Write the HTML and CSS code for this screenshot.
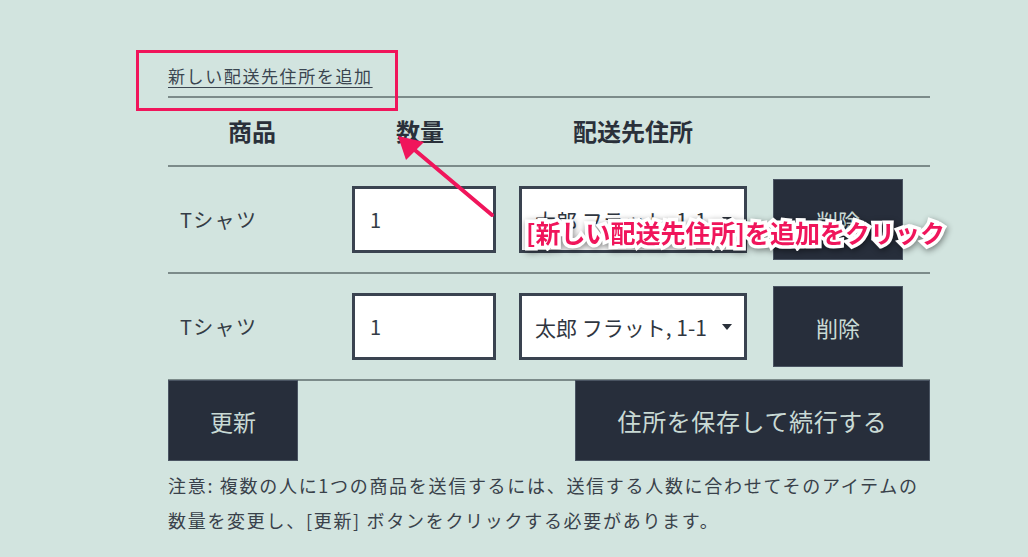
FILE: index.html
```html
<!DOCTYPE html>
<html lang="ja">
<head>
    <meta charset="UTF-8">
    <meta name="viewport" content="width=device-width, initial-scale=1.0">
    <title>配送先住所</title>
    <link rel="stylesheet" href="styles.css">
</head>
<body>
    <div class="page">
        <div class="add-row">
            <a class="add-link" href="#">新しい配送先住所を追加</a>
        </div>

        <div class="cart">
            <div class="cart-head">
                <div class="head-cell">商品</div>
                <div class="head-cell">数量</div>
                <div class="head-cell">配送先住所</div>
                <div class="head-cell"></div>
            </div>

            <div class="cart-row">
                <div class="item-name">Tシャツ</div>
                <div class="qty-cell"><div class="qty-box">1</div></div>
                <div class="addr-cell">
                    <div class="addr-select">
                        <span class="addr-text">太郎 フラット, 1-1</span>
                        <span class="caret"></span>
                    </div>
                </div>
                <div class="del-cell"><button class="btn btn-del">削除</button></div>
            </div>

            <div class="cart-row">
                <div class="item-name">Tシャツ</div>
                <div class="qty-cell"><div class="qty-box">1</div></div>
                <div class="addr-cell">
                    <div class="addr-select">
                        <span class="addr-text">太郎 フラット, 1-1</span>
                        <span class="caret"></span>
                    </div>
                </div>
                <div class="del-cell"><button class="btn btn-del">削除</button></div>
            </div>
        </div>

        <div class="actions">
            <button class="btn btn-update">更新</button>
            <button class="btn btn-save">住所を保存して続行する</button>
        </div>

        <p class="note">注意: 複数の人に1つの商品を送信するには、送信する人数に合わせてそのアイテムの数量を変更し、[更新] ボタンをクリックする必要があります。</p>
    </div>

    <!-- annotation layer -->
    <div class="callout-box"></div>
    <svg class="callout-arrow" width="120" height="100" viewBox="0 0 120 100">
        <line x1="94" y1="79" x2="12" y2="10" stroke="#f0155b" stroke-width="4" stroke-linecap="round"/>
        <polygon points="0,0 26,6 8,24" fill="#f0155b"/>
    </svg>
    <div class="callout-label">[新しい配送先住所]を追加をクリック</div>
</body>
</html>
```

FILE: styles.css
```css
body {
    margin: 0;
    background-color: #d2e4df;
    font-family: "Noto Sans CJK JP", "Noto Sans", sans-serif;
    color: #3a424c;
}

.page {
    width: 762px;
    margin-left: 168px;
}

.add-row {
    height: 96px;
    padding-top: 63px;
    box-sizing: border-box;
}

.add-link {
    font-size: 17px;
    letter-spacing: 1.6px;
    color: #3a4550;
    text-decoration: underline;
    text-underline-offset: 4px;
    text-decoration-thickness: 1px;
}

.cart {
    border-top: 2px solid #7c8b8a;
}

.cart-head,
.cart-row {
    display: grid;
    grid-template-columns: 168px 168px 258px 168px;
    align-items: center;
    border-bottom: 2px solid #7c8b8a;
}

.cart-head {
    height: 67px;
}

.head-cell {
    text-align: center;
    font-size: 24px;
    font-weight: bold;
    color: #2a303a;
    padding-bottom: 2px;
}

.cart-row {
    height: 105px;
}

.item-name {
    padding-left: 12px;
    font-size: 20px;
    letter-spacing: 1.3px;
    color: #343c46;
}

.qty-box {
    width: 144px;
    height: 67px;
    margin-left: 16px;
    box-sizing: border-box;
    border: 3px solid #3a4350;
    background: #fff;
    padding-left: 15px;
    font-size: 20px;
    line-height: 61px;
    color: #343c46;
}

.addr-select {
    width: 228px;
    height: 67px;
    margin-left: 15px;
    box-sizing: border-box;
    border: 3px solid #3a4350;
    background: #fff;
    display: flex;
    align-items: center;
    padding: 0 12px 0 13px;
}

.addr-text {
    flex: 1;
    overflow: hidden;
    white-space: nowrap;
    font-size: 21px;
    color: #2f3640;
}

.caret {
    width: 0;
    height: 0;
    margin-left: 6px;
    border-left: 5px solid transparent;
    border-right: 5px solid transparent;
    border-top: 6px solid #2a303a;
}

.btn {
    background-color: #272e3b;
    color: #c9dad5;
    border: 1px solid #4a5462;
    font-family: "Noto Sans CJK JP", sans-serif;
    cursor: pointer;
    padding: 0;
}

.btn-del {
    width: 130px;
    height: 81px;
    margin-left: 11px;
    font-size: 22px;
}

.actions {
    display: flex;
    justify-content: space-between;
    margin-top: -1px;
}

.btn-update {
    width: 130px;
    height: 81px;
    font-size: 23px;
}

.btn-save {
    width: 355px;
    height: 81px;
    font-size: 24px;
    letter-spacing: 0.6px;
}

.note {
    margin: 7px 0 0;
    font-size: 18px;
    letter-spacing: 1.7px;
    line-height: 35px;
    color: #39414a;
}

/* annotation */
.callout-box {
    position: absolute;
    left: 136px;
    top: 50px;
    width: 256px;
    height: 55px;
    border: 3px solid #f0155b;
}

.callout-arrow {
    position: absolute;
    left: 398px;
    top: 136px;
}

.callout-label {
    position: absolute;
    left: 526px;
    top: 214px;
    font-size: 25px;
    font-weight: bold;
    color: #f0155b;
    white-space: nowrap;
    -webkit-text-stroke: 7px #fff;
    paint-order: stroke fill;
    filter: drop-shadow(1px 2px 3px rgba(0, 0, 0, 0.45));
}
```
